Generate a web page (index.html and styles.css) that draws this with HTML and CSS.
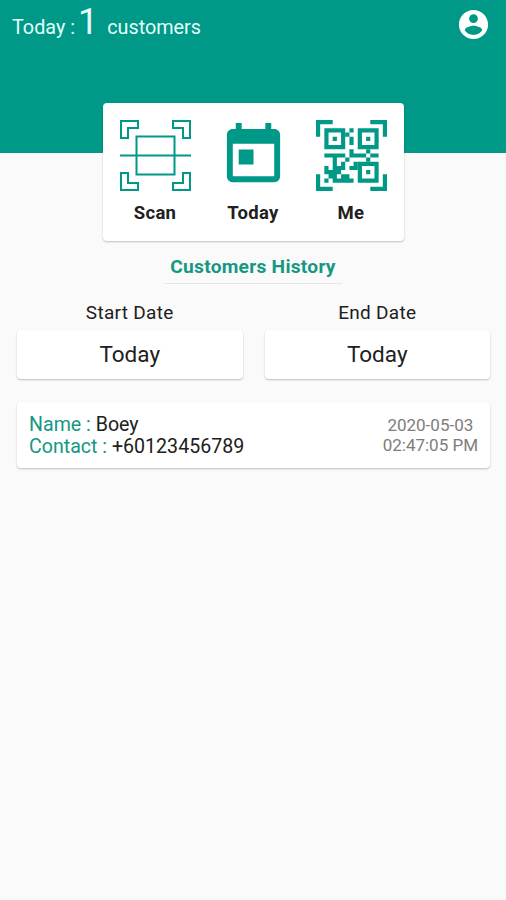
FILE: index.html
```
<!DOCTYPE html>
<html lang="en">
<head>
<meta charset="utf-8">
<title>Customers</title>
<link rel="stylesheet" href="styles.css">
</head>
<body>
<header class="header">
  <div class="summary"><span class="summary-label">Today :</span><span class="summary-count">1</span><span class="summary-unit">customers</span></div>
  <svg class="account" viewBox="0 0 24 24"><path d="M12 2C6.48 2 2 6.48 2 12s4.48 10 10 10 10-4.48 10-10S17.52 2 12 2zm0 3c1.66 0 3 1.34 3 3s-1.34 3-3 3-3-1.34-3-3 1.34-3 3-3zm0 14.2c-2.5 0-4.71-1.28-6-3.22.03-1.99 4-3.08 6-3.08 1.99 0 5.97 1.09 6 3.08-1.29 1.94-3.5 3.22-6 3.22z"/></svg>
</header>
<main class="main">
  <nav class="actions card">
    <div class="action">
      <svg class="icon" viewBox="0 0 71 71"><g class="line"><path d="M1 1H18V8H8V18H1ZM70 1H53V8H63V18H70ZM1 70H18V63H8V53H1ZM70 70H53V63H63V53H70Z"/><path d="M16.5 16.5H54.5V54.5H16.5ZM0 35.5H71"/></g></svg>
      <span>Scan</span>
    </div>
    <div class="action">
      <svg class="icon" viewBox="0 0 24 24"><path d="M19 3h-1V1h-2v2H8V1H6v2H5c-1.11 0-1.99.9-1.99 2L3 19c0 1.1.89 2 2 2h14c1.1 0 2-.9 2-2V5c0-1.1-.9-2-2-2zm0 16H5V8h14v11zM7 10h5v5H7z"/></svg>
      <span>Today</span>
    </div>
    <div class="action">
      <svg class="icon" viewBox="0 0 17 17">
        <path d="M0 0H4V1H1V4H0ZM13 0H17V4H16V1H13ZM0 13H1V16H4V17H0ZM16 13H17V17H13V16H16Z"/>
        <path fill-rule="evenodd" d="M2 2H7V7H2ZM3 3V6H6V3ZM4 4H5V5H4ZM10 2H15V7H10ZM11 3V6H14V3ZM12 4H13V5H12ZM10 10H15V15H10ZM11 11V14H14V11ZM12 12H13V13H12Z"/>
        <path d="M8 2H9V3H8ZM7 3H8V4H7ZM8 4H9V6H8ZM8 7H9V8H12V9H8ZM2 8H7V9H5V11H6V10H7V12H6V13H5V14H6V13H7V14H9V15H4V13H3V12H4V9H2ZM12 7H13V8H12ZM13 8H15V9H13ZM12 9H13V10H12ZM7 9H8V10H7ZM9 10H10V12H9ZM8 11H9V12H8ZM2 11H3V13H2ZM3 13H4V14H3ZM2 14H3V15H2ZM7 13H8V14H7Z"/>
      </svg>
      <span>Me</span>
    </div>
  </nav>
  <h1 class="title">Customers History</h1>
  <section class="filters">
    <div class="filter"><span class="filter-label">Start Date</span><div class="date card">Today</div></div>
    <div class="filter"><span class="filter-label">End Date</span><div class="date card">Today</div></div>
  </section>
  <article class="customer card">
    <div class="details">
      <div><span class="key">Name :</span> Boey</div>
      <div><span class="key">Contact :</span> +60123456789</div>
    </div>
    <div class="time"><div>2020-05-03</div><div>02:47:05 PM</div></div>
  </article>
</main>
</body>
</html>
```
FILE: styles.css
```
* { box-sizing: border-box; }
body {
  margin: 0;
  min-height: 900px;
  background: #fafafa;
  color: #202020;
  font-family: Roboto, sans-serif;
}
.header {
  display: flex;
  justify-content: space-between;
  align-items: flex-start;
  height: 153px;
  padding: 7px 15px 0 12px;
  background: #009887;
  color: #e2fffb;
}
.summary { display: flex; align-items: baseline; height: 34px; margin-top: -5px; line-height: 40px; white-space: nowrap; }
.summary-label, .summary-unit { font-size: 19.8px; }
.summary-count { font-size: 36px; margin: 0 9px 0 3px; }
.account { width: 35px; height: 35px; fill: #fff; }
.main { display: flex; flex-direction: column; align-items: center; padding: 0 16px; margin-top: -50px; }
.card { background: #fff; border-radius: 4px; box-shadow: 0 1px 2px rgba(0, 0, 0, .24); }
.actions { display: flex; justify-content: space-around; width: 301px; height: 138px; padding: 17px 3px 0 4px; }
.action { display: flex; flex-direction: column; align-items: center; width: 98px; font-size: 18.5px; font-weight: 700; letter-spacing: .3px; line-height: 24px; }
.action span { margin: 10px 1px 0 0; }
.icon { width: 71px; height: 71px; fill: #009887; }
.line { fill: none; stroke: #009887; stroke-width: 2; }
.title {
  width: 178px;
  height: 31px;
  margin: 12px 0 0;
  border-bottom: 1px solid #e6e6e6;
  color: #159783;
  font-size: 19.2px;
  letter-spacing: .25px;
  font-weight: 700;
  line-height: 27px;
  text-align: center;
  white-space: nowrap;
}
.filters { display: flex; gap: 22px; width: 100%; padding: 0 0 0 1px; margin-top: 17px; }
.filter { flex: 1; text-align: center; }
.filter-label { display: block; font-size: 19px; letter-spacing: .3px; line-height: 24px; height: 29px; }
.date { height: 49px; font-size: 22.5px; line-height: 48px; }
.customer { display: flex; justify-content: space-between; width: 473px; height: 66px; margin: 23px 0 0 1px; padding: 12px 12px 0; }
.details { font-size: 19.6px; line-height: 22px; }
.key { color: #159783; }
.time { padding-top: 1px; color: #7d7d7d; font-size: 17px; line-height: 20px; text-align: center; }
```
